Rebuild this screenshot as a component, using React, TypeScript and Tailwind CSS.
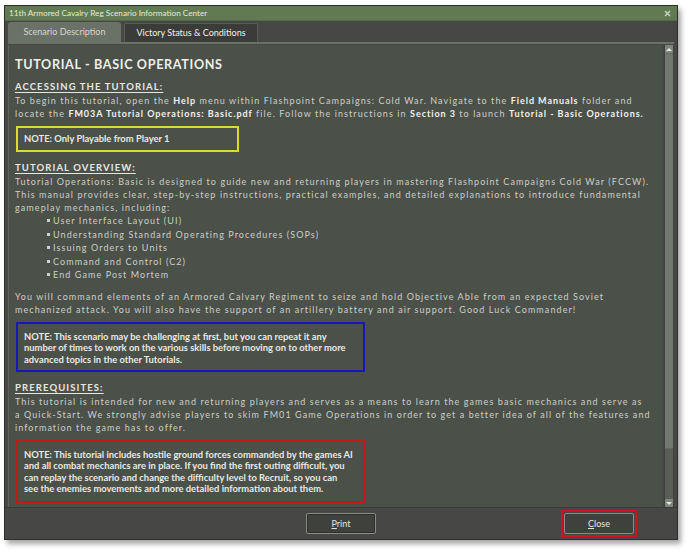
import React from 'react';

const body = "text-[9px] tracking-[1.08px] text-[#cdcfc7] leading-[13px] whitespace-nowrap";

function B({ children }: { children: React.ReactNode }) {
  return <span className="font-bold tracking-[0.94px] text-[#f2f2ee]">{children}</span>;
}

function Heading({ children, className = '' }: { children: React.ReactNode; className?: string }) {
  return (
    <div className={`text-[9.5px] font-bold tracking-[1.1px] underline underline-offset-[2px] text-[#e6e7e2] leading-[14px] ${className}`}>
      {children}
    </div>
  );
}

function Note({ color, width, children, className = '' }: { color: string; width: string; children: React.ReactNode; className?: string }) {
  return (
    <div className={`border-2 ${color} ${width} pl-[6px] text-[9.4px] font-bold text-[#e8e9e4] leading-[11.6px] whitespace-nowrap ${className}`}>
      {children}
    </div>
  );
}

const bullets = [
  'User Interface Layout (UI)',
  'Understanding Standard Operating Procedures (SOPs)',
  'Issuing Orders to Units',
  'Command and Control (C2)',
  'End Game Post Mortem',
];

export default function App() {
  return (
    <div className="w-[691px] h-[552px] bg-white pl-[4px] pt-[5px]" style={{ fontFamily: 'Lato, "Open Sans", sans-serif' }}>
      <div className="w-[674px] h-[535px] flex flex-col bg-[#474845] border border-[#2f302d] shadow-[3px_4px_5px_rgba(0,0,0,0.35)]">
        {/* title bar */}
        <div className="h-[15px] bg-[#617a52] flex items-center justify-between pl-[4px] pr-[6px] border-b border-[#55694a]">
          <span className="text-[8.2px] text-[#e3e9dc] leading-none">11th Armored Cavalry Reg Scenario Information Center</span>
          <svg width="7" height="7" viewBox="0 0 7 7" stroke="#c9d2c2" strokeWidth="1.4">
            <line x1="1" y1="1" x2="6" y2="6" />
            <line x1="6" y1="1" x2="1" y2="6" />
          </svg>
        </div>

        {/* tabs */}
        <div className="h-[21px] flex items-end gap-[3px] pl-[3px]">
          <div className="w-[113px] h-[20px] bg-[#6a7167] rounded-t-[3px] flex items-center justify-center text-[9px] text-[#d3d6cf]">
            Scenario Description
          </div>
          <div className="w-[134px] h-[19px] bg-[#3b3c39] border border-b-0 border-[#5b5c58] rounded-t-[2px] flex items-center justify-center text-[9px] text-[#f0f0ec]">
            Victory Status &amp; Conditions
          </div>
        </div>
        <div className="h-[2px] mx-[3px] bg-[#6a7167]" />

        {/* content */}
        <div className="flex-1 flex mx-[3px] mt-[1px] gap-[2px] min-h-0">
          <div className="flex-1 bg-[#4b5049] border-l border-[#5d625a] pl-[6px] pt-[13px] overflow-hidden">
            <div className="text-[12.6px] font-bold tracking-[0.65px] text-[#eeefea] leading-[14px]">TUTORIAL - BASIC OPERATIONS</div>

            <Heading className="mt-[8px]">ACCESSING THE TUTORIAL:</Heading>
            <div className={body}>
              To begin this tutorial, open the <B>Help</B> menu within Flashpoint Campaigns: Cold War. Navigate to the <B>Field Manuals</B> folder and
            </div>
            <div className={body}>
              locate the <B>FM03A Tutorial Operations: Basic.pdf</B> file. Follow the instructions in <B>Section 3</B> to launch <B>Tutorial - Basic Operations.</B>
            </div>

            <Note color="border-[#d9dc2e]" width="w-[223px]" className="mt-[6px] ml-[1px] h-[26px] flex items-center">
              NOTE: Only Playable from Player 1
            </Note>

            <Heading className="mt-[9px]">TUTORIAL OVERVIEW:</Heading>
            <div className={body}>
              Tutorial Operations: Basic is designed to guide new and returning players in mastering Flashpoint Campaigns Cold War (FCCW).
            </div>
            <div className={body}>
              This manual provides clear, step-by-step instructions, practical examples, and detailed explanations to introduce fundamental
            </div>
            <div className={body}>gameplay mechanics, including:</div>
            <div className="pl-[32px] flex flex-col">
              {bullets.map((b) => (
                <div key={b} className={`${body} h-[13.5px] flex items-center gap-[3px]`}>
                  <span className="w-[3px] h-[3px] bg-[#cfd1c9] inline-block" />
                  {b}
                </div>
              ))}
            </div>

            <div className={`${body} mt-[8px]`}>
              You will command elements of an Armored Calvary Regiment to seize and hold Objective Able from an expected Soviet
            </div>
            <div className={body}>
              mechanized attack. You will also have the support of an artillery battery and air support. Good Luck Commander!
            </div>

            <Note color="border-[#1717b8]" width="w-[349px]" className="mt-[6px] ml-[1px] h-[50px] pt-[7px]">
              <div>NOTE: This scenario may be challenging at first, but you can repeat it any</div>
              <div>number of times to work on the various skills before moving on to other more</div>
              <div>advanced topics in the other Tutorials.</div>
            </Note>

            <Heading className="mt-[9px]">PREREQUISITES:</Heading>
            <div className={body}>
              This tutorial is intended for new and returning players and serves as a means to learn the games basic mechanics and serve as
            </div>
            <div className={body}>
              a Quick-Start. We strongly advise players to skim FM01 Game Operations in order to get a better idea of all of the features and
            </div>
            <div className={body}>information the game has to offer.</div>

            <Note color="border-[#c8161f]" width="w-[349px]" className="mt-[6px] ml-[1px] h-[63px] pt-[7px]">
              <div>NOTE: This tutorial includes hostile ground forces commanded by the games AI</div>
              <div>and all combat mechanics are in place. If you find the first outing difficult, you</div>
              <div>can replay the scenario and change the difficulty level to Recruit, so you can</div>
              <div>see the enemies movements and more detailed information about them.</div>
            </Note>
          </div>

          {/* scrollbar */}
          <div className="w-[10px] flex flex-col bg-[#5a5e57] border-x border-[#3f413d]">
            <div className="h-[8px] bg-[#80867d] flex items-center justify-center">
              <div className="w-0 h-0 border-x-[3px] border-x-transparent border-b-[3px] border-b-[#e5e7e2]" />
            </div>
            <div className="h-[396px] bg-[#737970] border-y border-[#62675f]" />
            <div className="flex-1" />
            <div className="h-[8px] bg-[#80867d] flex items-center justify-center">
              <div className="w-0 h-0 border-x-[3px] border-x-transparent border-t-[3px] border-t-[#e5e7e2]" />
            </div>
          </div>
        </div>

        {/* buttons */}
        <div className="h-[32px] grid grid-cols-3 items-center border-t border-[#3a3b38]">
          <div />
          <div className="flex justify-center">
            <button className="w-[70px] h-[21px] bg-[#3f413d] border border-[#8a8b86] rounded-[2px] shadow-[inset_0_0_0_1px_#2e2f2c] text-[9px] text-[#e4e5e0]">
              <span className="underline">P</span>rint
            </button>
          </div>
          <div className="flex justify-end pr-[40px]">
            <div className="border-2 border-[#d0121c] p-[1px]">
              <button className="w-[70px] h-[21px] bg-[#3f413d] border border-[#8a8b86] rounded-[2px] text-[9px] text-[#e4e5e0] block">
                <span className="underline">C</span>lose
              </button>
            </div>
          </div>
        </div>
      </div>
    </div>
  );
}
